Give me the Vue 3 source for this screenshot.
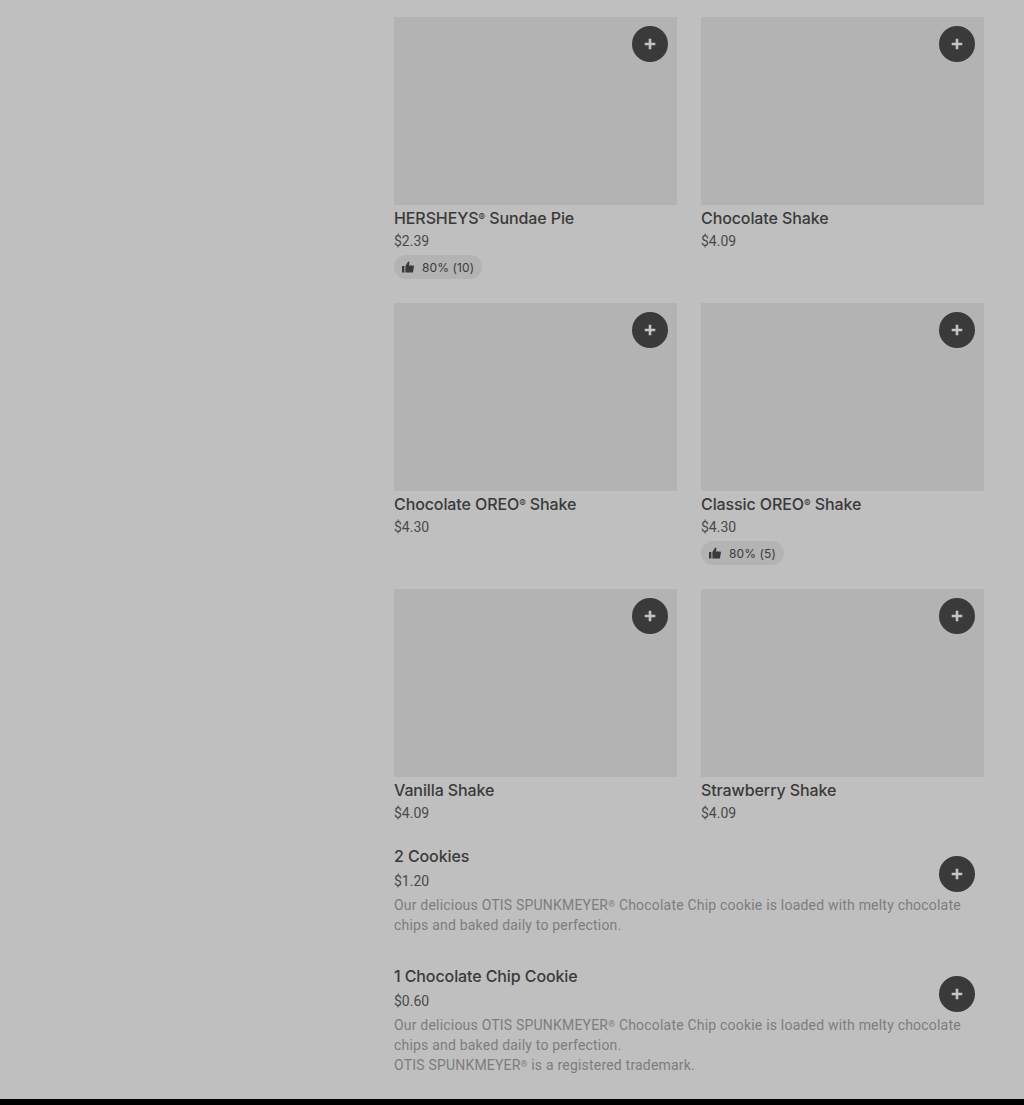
<script setup>
const cards = [
  { name: 'HERSHEYS® Sundae Pie', price: '$2.39', rating: '80% (10)' },
  { name: 'Chocolate Shake', price: '$4.09' },
  { name: 'Chocolate OREO® Shake', price: '$4.30' },
  { name: 'Classic OREO® Shake', price: '$4.30', rating: '80% (5)' },
  { name: 'Vanilla Shake', price: '$4.09' },
  { name: 'Strawberry Shake', price: '$4.09' },
]

const cookieLines = [
  'Our delicious OTIS SPUNKMEYER® Chocolate Chip cookie is loaded with melty chocolate',
  'chips and baked daily to perfection.',
]

const items = [
  { name: '2 Cookies', price: '$1.20', lines: cookieLines },
  { name: '1 Chocolate Chip Cookie', price: '$0.60', lines: [...cookieLines, 'OTIS SPUNKMEYER® is a registered trademark.'] },
]

// the ® is set smaller than the text around it
const parts = (text) => text.split(/(®)/)
</script>

<template>
  <div class="page">
    <main class="menu">
      <div class="grid">
        <div v-for="card in cards" :key="card.name" class="card">
          <div class="photo">
            <button class="add">
              <svg width="16" height="16" viewBox="0 0 16 16"><path d="M9.3 2.7H6.7v4H2.7v2.6h4v4h2.6v-4h4V6.7h-4z" fill="currentColor" /></svg>
            </button>
          </div>
          <div class="name">
            <span v-for="(part, i) in parts(card.name)" :key="i" :class="{ reg: part === '®' }">{{ part }}</span>
          </div>
          <div class="price">{{ card.price }}</div>
          <div v-if="card.rating" class="pill">
            <svg width="12" height="12" viewBox="0 0 12 12"><path d="M0 5h2.4v6.5H0zM3.4 5 6.2.5l1.3.6-.5 3.4h4.4l.6.8-1.1 6.2H3.4z" fill="currentColor" /></svg>
            <span>{{ card.rating }}</span>
          </div>
        </div>
      </div>
      <div class="list">
        <div v-for="item in items" :key="item.name" class="item">
          <div class="head">
            <div>
              <div class="name">{{ item.name }}</div>
              <div class="price gap">{{ item.price }}</div>
            </div>
            <button class="add inline">
              <svg width="16" height="16" viewBox="0 0 16 16"><path d="M9.3 2.7H6.7v4H2.7v2.6h4v4h2.6v-4h4V6.7h-4z" fill="currentColor" /></svg>
            </button>
          </div>
          <div v-for="line in item.lines" :key="line" class="desc">
            <span v-for="(part, i) in parts(line)" :key="i" :class="{ reg: part === '®' }">{{ part }}</span>
          </div>
        </div>
      </div>
    </main>
    <div class="footer"></div>
  </div>
</template>

<style scoped>
.page {
  height: 1105px;
  display: flex;
  flex-direction: column;
  background: #bfbfbf;
  font-family: Inter, "Liberation Sans", sans-serif;
  overflow: hidden;
}
.menu {
  flex: 1;
  padding: 17px 40px 0 394px;
}
.grid {
  display: grid;
  grid-template-columns: 283px 283px;
  column-gap: 24px;
  row-gap: 24px;
}
.card {
  display: flex;
  flex-direction: column;
  align-items: flex-start;
}
.photo {
  align-self: stretch;
  height: 188px;
  background: #b3b3b3;
  display: flex;
  justify-content: flex-end;
  padding: 9px;
  box-sizing: border-box;
  margin-bottom: 3px;
}
.add {
  width: 36px;
  height: 36px;
  border: none;
  border-radius: 50%;
  background: #3a3a3a;
  color: #c4c4c4;
  padding: 0;
  display: flex;
  align-items: center;
  justify-content: center;
}
.add.inline {
  margin: 10px 9px 0 0;
}
.name {
  font-size: 16px;
  line-height: 20px;
  font-weight: 500;
  letter-spacing: -0.1px;
  color: #3a3a3a;
}
.reg {
  font-size: 0.62em;
  line-height: 0;
  vertical-align: 0.35em;
}
.price {
  font-family: Roboto, "Liberation Sans", sans-serif;
  font-size: 14px;
  line-height: 20px;
  color: #4a4a4a;
  margin-top: 3px;
}
.price.gap {
  margin-top: 5px;
  margin-bottom: 4px;
}
.pill {
  display: flex;
  align-items: center;
  gap: 8px;
  height: 24px;
  margin-top: 4px;
  padding: 0 8px;
  border-radius: 12px;
  background: #b3b3b3;
  color: #3a3a3a;
  font-size: 12px;
  letter-spacing: 0.1px;
}
.list {
  margin-top: 23px;
  display: flex;
  flex-direction: column;
  gap: 31px;
}
.head {
  display: flex;
  justify-content: space-between;
  align-items: flex-start;
}
.desc {
  font-family: Roboto, "Liberation Sans", sans-serif;
  font-size: 14px;
  line-height: 20px;
  letter-spacing: 0.2px;
  color: #7d7d7d;
}
.footer {
  height: 6px;
  background: #000;
}
</style>
